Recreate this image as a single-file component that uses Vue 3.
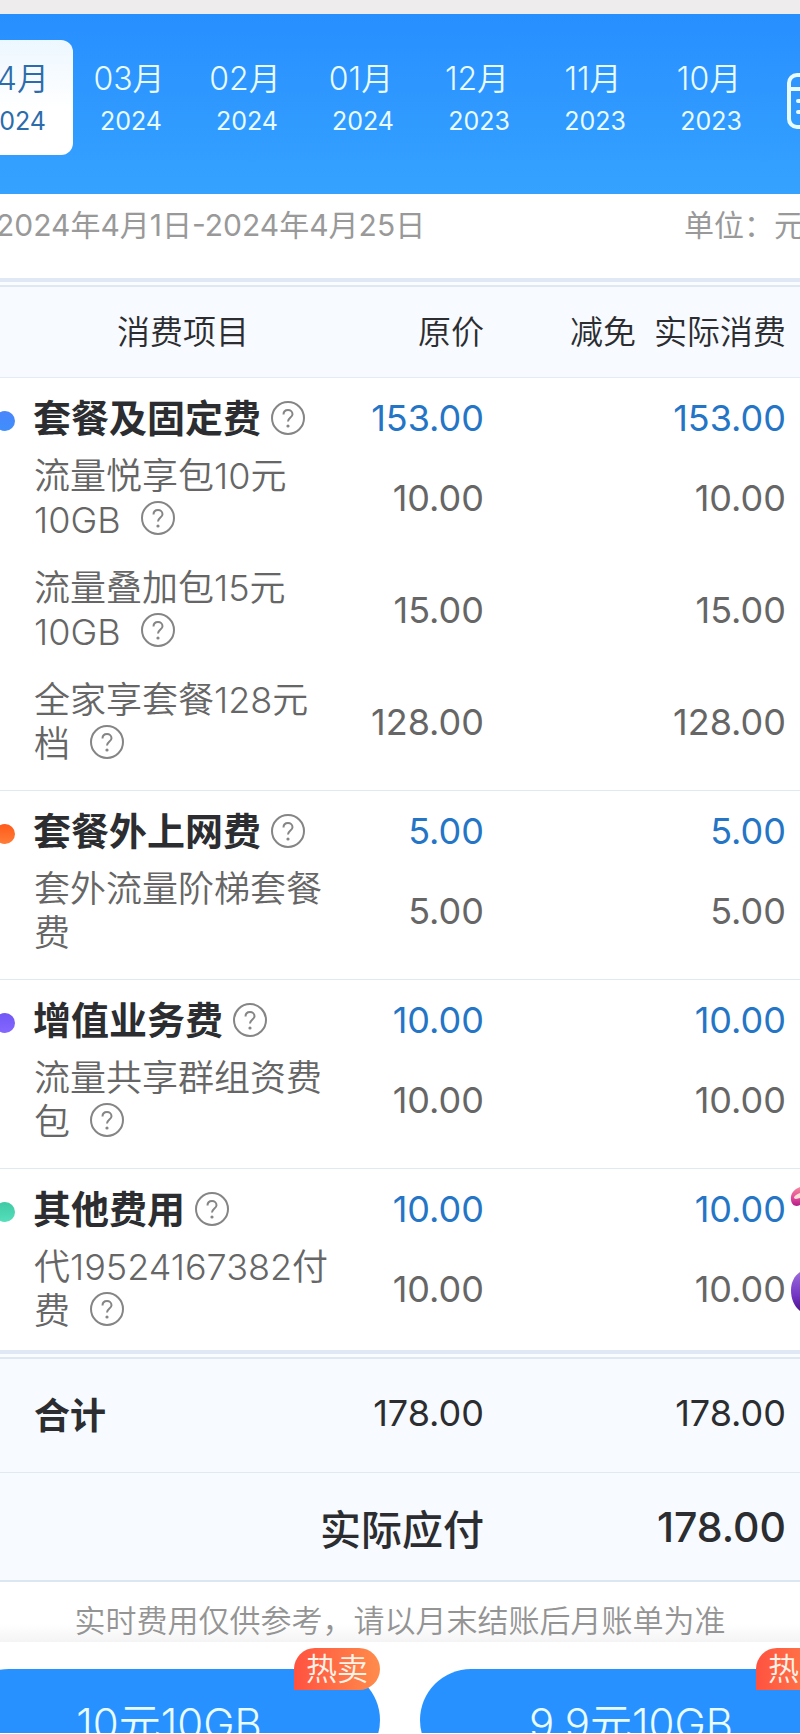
<template>
  <div class="bill-page">
    <header class="month-bar">
      <nav class="months" aria-label="账单月份">
        <button
          v-for="m in months"
          :key="m.year + m.month"
          type="button"
          class="month"
          :class="{ active: m.month === current }"
          @click="current = m.month"
        >
          <span class="month-name">{{ m.month }}月</span>
          <span class="month-year">{{ m.year }}</span>
        </button>
      </nav>
      <button type="button" class="calendar-btn" aria-label="选择月份">
        <svg width="56" height="58" viewBox="0 0 56 58" fill="none" stroke="currentColor" stroke-width="4" stroke-linecap="round">
          <rect x="2" y="3" width="52" height="52" rx="8" />
          <path d="M2 17H54M11 29H17M11 40H17M25 29H32M25 40H32M40 29H46M40 40H46" />
        </svg>
      </button>
    </header>

    <div class="range">
      <span>2024年4月1日-2024年4月25日</span>
      <span>单位：元</span>
    </div>

    <main class="bill">
      <table class="bill-table">
        <colgroup>
          <col class="col-name" />
          <col class="col-price" />
          <col class="col-off" />
          <col />
        </colgroup>
        <thead>
          <tr>
            <th class="head-name" scope="col">消费项目</th>
            <th scope="col">原价</th>
            <th scope="col">减免</th>
            <th scope="col">实际消费</th>
          </tr>
        </thead>
        <tbody v-for="g in groups" :key="g.name">
          <tr class="group-row">
            <th scope="rowgroup">
              <div class="group-title">
                <i class="dot" :class="g.color"></i>
                <span>{{ g.name }}</span>
                <button type="button" class="help" :aria-label="g.name + '说明'">
                  <svg viewBox="0 0 34 34"><circle cx="17" cy="17" r="16" /><path d="M12.5 13.5C12.5 10.5 14.500 9 17 9S21.500 10.600 21.500 13.200C21.500 16.500 17 16.500 17 20.500" /><circle class="point" cx="17" cy="25" r="1.600" /></svg>
                </button>
              </div>
            </th>
            <td>{{ g.amount }}</td>
            <td></td>
            <td>{{ g.amount }}</td>
          </tr>
          <tr v-for="item in g.items" :key="item.name" class="item-row">
            <th scope="row">
              {{ item.name }}
              <button v-if="item.help" type="button" class="help" :aria-label="item.name + '说明'">
                <svg viewBox="0 0 34 34"><circle cx="17" cy="17" r="16" /><path d="M12.5 13.5C12.5 10.5 14.500 9 17 9S21.500 10.600 21.500 13.200C21.500 16.500 17 16.500 17 20.500" /><circle class="point" cx="17" cy="25" r="1.600" /></svg>
              </button>
            </th>
            <td>{{ item.amount }}</td>
            <td></td>
            <td>{{ item.amount }}</td>
          </tr>
        </tbody>
        <tfoot>
          <tr class="total-row">
            <th scope="row">合计</th>
            <td>178.00</td>
            <td></td>
            <td>178.00</td>
          </tr>
          <tr class="due-row">
            <th colspan="2" scope="row">实际应付</th>
            <td></td>
            <td>178.00</td>
          </tr>
        </tfoot>
      </table>

      <!-- 右侧悬浮的活动挂件 -->
      <svg class="floater" width="10" height="128" viewBox="0 0 10 128" aria-hidden="true">
        <defs>
          <linearGradient id="ribbon" x1="0" y1="0" x2="0" y2="1">
            <stop offset="0" stop-color="#f58a9b" />
            <stop offset="0.6" stop-color="#e0459a" />
            <stop offset="1" stop-color="#b01f86" />
          </linearGradient>
          <linearGradient id="ball" x1="0" y1="0" x2="0" y2="1">
            <stop offset="0" stop-color="#9a6bdc" />
            <stop offset="0.6" stop-color="#7436c4" />
            <stop offset="1" stop-color="#4b1390" />
          </linearGradient>
        </defs>
        <path d="M10 1C4 3 0 8 1 14C2 20 6 21 10 19Z" fill="url(#ribbon)" />
        <path d="M10 7C7 8 4 10 4 12C6 14 8 12 10 12Z" fill="#fde3d6" />
        <path d="M10 86C4 90 1 97 1 104C1 113 4 120 10 125Z" fill="url(#ball)" />
      </svg>
    </main>

    <p class="note">实时费用仅供参考，请以月末结账后月账单为准</p>

    <footer class="actions">
      <button v-for="p in packs" :key="p" type="button" class="pack">
        {{ p }}
        <span class="badge">热卖</span>
      </button>
    </footer>
  </div>
</template>

<script setup>
import { ref } from 'vue'

const current = ref('04')

const months = [
  { month: '04', year: '2024' },
  { month: '03', year: '2024' },
  { month: '02', year: '2024' },
  { month: '01', year: '2024' },
  { month: '12', year: '2023' },
  { month: '11', year: '2023' },
  { month: '10', year: '2023' }
]

const groups = [
  {
    name: '套餐及固定费',
    color: 'blue',
    amount: '153.00',
    items: [
      { name: '流量悦享包10元10GB', amount: '10.00', help: true },
      { name: '流量叠加包15元10GB', amount: '15.00', help: true },
      { name: '全家享套餐128元档', amount: '128.00', help: true }
    ]
  },
  {
    name: '套餐外上网费',
    color: 'orange',
    amount: '5.00',
    items: [{ name: '套外流量阶梯套餐费', amount: '5.00', help: false }]
  },
  {
    name: '增值业务费',
    color: 'purple',
    amount: '10.00',
    items: [{ name: '流量共享群组资费包', amount: '10.00', help: true }]
  },
  {
    name: '其他费用',
    color: 'green',
    amount: '10.00',
    items: [{ name: '代19524167382付费', amount: '10.00', help: true }]
  }
]

const packs = ['10元10GB', '9.9元10GB']
</script>

<style>
body {
  margin: 0;
  background: #fff;
}
</style>

<style scoped>
.bill-page {
  font-family: Inter, "Noto Sans CJK SC", sans-serif;
  font-weight: 350;
  color: #2b2d30;
  border-top: 14px solid #eeecec;
  overflow: hidden;
}
button {
  font: inherit;
  color: inherit;
  border: 0;
  padding: 0;
  background: none;
  cursor: pointer;
}

.month-bar {
  display: flex;
  align-items: flex-start;
  height: 180px;
  box-sizing: border-box;
  padding-top: 26px;
  background: linear-gradient(#288fff, #35a2ff);
  color: #e8fbff;
  overflow: hidden;
}
.months {
  display: flex;
  flex: none;
  margin-left: -43px;
}
.month {
  display: flex;
  flex-direction: column;
  align-items: center;
  width: 116px;
  height: 115px;
  padding-top: 18px;
  border-radius: 12px;
}
.month.active {
  background: linear-gradient(#edf7ff, #fff 60%);
  color: #2c6cab;
}
.month-name {
  padding-right: 4px;
  font-size: 32px;
  line-height: 42px;
}
.month-year {
  font-size: 25px;
  font-weight: 400;
  line-height: 42px;
}
.calendar-btn {
  flex: none;
  margin: 32px 0 0 18px;
}
.calendar-btn svg { display: block; }

.range {
  display: flex;
  justify-content: space-between;
  margin: 0 -4px 22px;
  font-size: 30px;
  font-weight: 400;
  line-height: 62px;
  color: #999;
}

.bill { position: relative; }
.bill-table {
  width: 100%;
  table-layout: fixed;
  border-collapse: separate;
  border-spacing: 0;
}
.col-name { width: 42%; }
.col-price { width: 18.5%; }
.col-off { width: 19%; }
th, td {
  padding: 0;
  font-weight: inherit;
  text-align: right;
  white-space: nowrap;
}
th:last-child, td:last-child { padding-right: 14px; }
tbody td, tfoot td {
  font-size: 36px;
  font-weight: 400;
}

thead th {
  height: 95px;
  border-top: 4px solid #dfe8f4;
  border-bottom: 1px solid #e4ebf2;
  background: linear-gradient(#fafdff 3px, #dfe8f0 3px, #dfe8f0 5px, #f7fafe 5px);
  font-size: 33px;
}
thead .head-name {
  padding-left: 30px;
  text-align: center;
}

.group-row th, .group-row td {
  height: 48px;
  padding-top: 16px;
}
.group-row td { color: #2475c6; }
.group-title {
  display: flex;
  align-items: center;
  font-size: 38px;
  font-weight: 700;
  line-height: 48px;
}
.dot {
  width: 20px;
  height: 20px;
  margin: 6px 18px 0 -5px;
  border-radius: 50%;
}
.dot.blue { background: linear-gradient(#4a86fb, #3f8efc); }
.dot.orange { background: linear-gradient(#ff5a1a, #ff7d38); }
.dot.purple { background: linear-gradient(#7357f5, #8467ff); }
.dot.green { background: linear-gradient(#3fc9a4, #55dfba); }

.item-row th {
  padding: 12px 0 12px 34px;
  font-size: 36px;
  line-height: 44px;
  text-align: left;
  white-space: normal;
}
.item-row { color: #666; }
tbody tr:last-child th, tbody tr:last-child td {
  padding-bottom: 24px;
  border-bottom: 1px solid #e0e8f1;
}
tbody tr:last-child td { padding-top: 12px; }
tbody:last-of-type tr:last-child th,
tbody:last-of-type tr:last-child td {
  padding-bottom: 17px;
  border-bottom: 0;
}

.help {
  display: inline-block;
  width: 34px;
  height: 34px;
  margin-left: 10px;
  vertical-align: -2px;
}
.help svg {
  display: block;
  fill: none;
  stroke: #858585;
  stroke-width: 2;
}
.help .point {
  fill: #858585;
  stroke: none;
}

tfoot th, tfoot td { background: #f7fafe; }
.total-row th, .total-row td {
  height: 118px;
  border-top: 4px solid #dfe8f4;
  border-bottom: 1px solid #e0e8f1;
  background: linear-gradient(#fafdff 3px, #dfe8f0 3px, #dfe8f0 5px, #f7fafe 5px);
}
.total-row th {
  padding-left: 34px;
  font-size: 36px;
  font-weight: 600;
  text-align: left;
}
.due-row th, .due-row td {
  height: 107px;
  border-bottom: 2px solid #dbe6f2;
  font-size: 41px;
  font-weight: 500;
}

.floater {
  position: absolute;
  right: 0;
  bottom: 268px;
}

.note {
  margin: 0;
  padding-top: 8px;
  height: 52px;
  font-size: 31px;
  line-height: 62px;
  text-align: center;
  color: #949494;
  background: linear-gradient(#fff 70%, #f4f4f4);
}

.actions {
  display: flex;
  gap: 40px;
  height: 64px;
  margin: 0 -42px;
  padding-top: 27px;
  background: #fff;
  overflow: hidden;
}
.pack {
  position: relative;
  flex: 1;
  height: 102px;
  border-radius: 51px;
  background: #2792ff;
  color: #e8fbff;
  font-size: 42px;
}
.badge {
  position: absolute;
  top: -21px;
  right: 0;
  padding: 0 12px;
  border-radius: 21px 21px 21px 0;
  background: linear-gradient(90deg, #ff5240, #ff8c4b);
  color: #fff3e8;
  font-size: 31px;
  line-height: 42px;
}
</style>
